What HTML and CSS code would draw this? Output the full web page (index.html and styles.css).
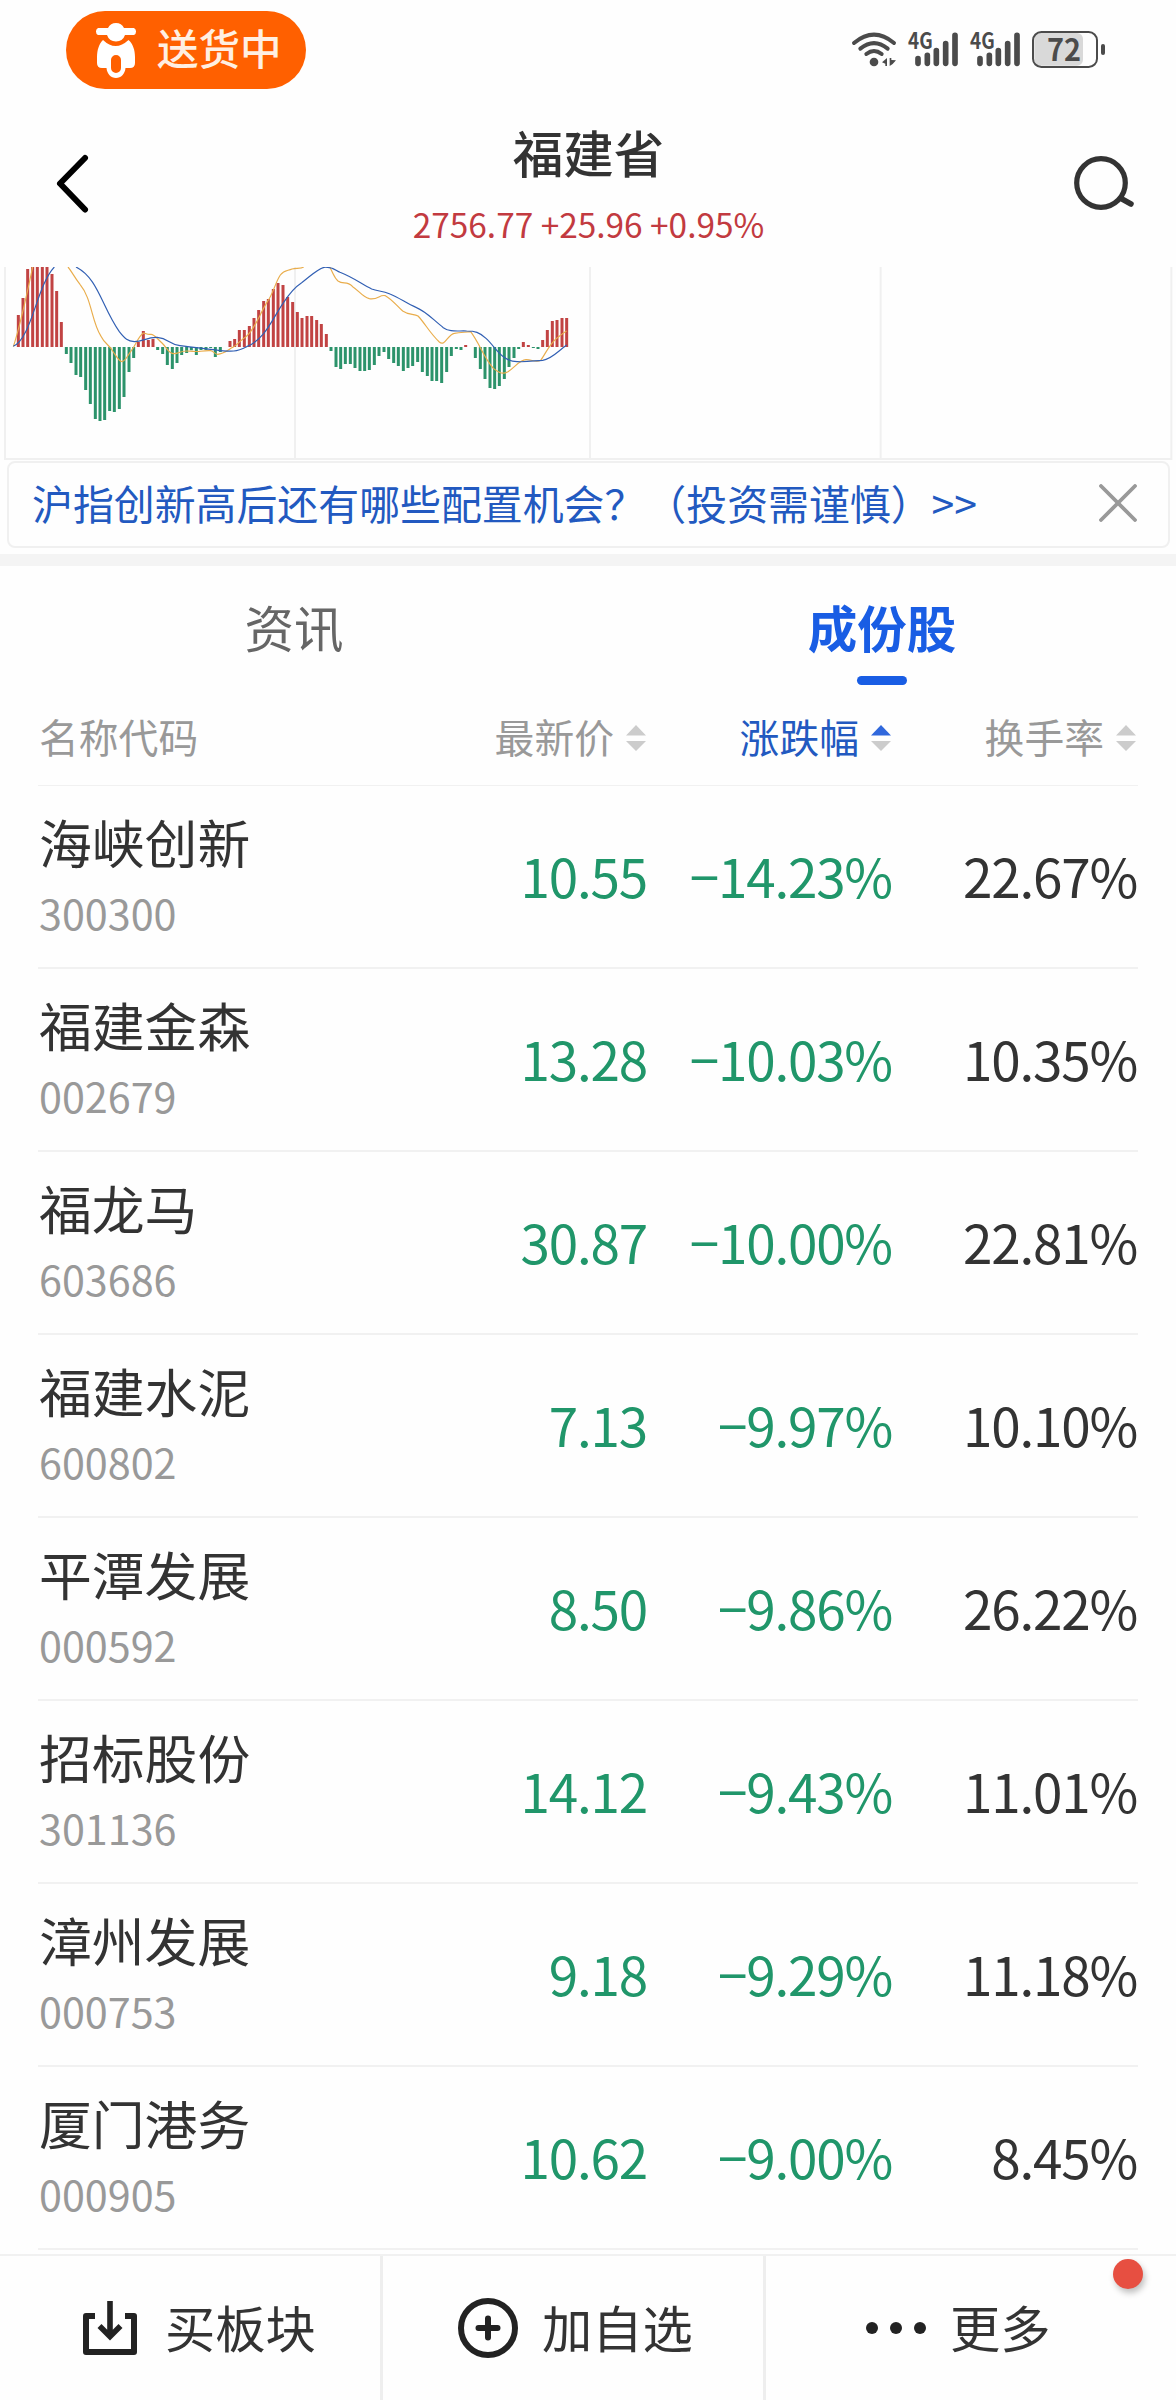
FILE: index.html
```html
<!DOCTYPE html>
<html lang="zh-CN">
<head>
<meta charset="utf-8">
<title>福建省</title>
<link rel="stylesheet" href="styles.css">
</head>
<body>
<div class="screen">
  <div class="status">
    <div class="pill">
      <svg class="scooter" viewBox="0 0 44 56" width="44" height="56"><path d="M4 6H14A9 9 0 0 1 30 6H40A4 4 0 0 1 40 13H31A9.500 9.500 0 0 1 13 13H4A4 4 0 0 1 4 6Z" fill="#fff"/><path fill-rule="evenodd" fill="#fff" d="M9 18Q21.500 30 34.500 18C39 22 41 28 41 35V41Q41 46 36 46H31.500C31 52 27 56 22 56S13 52 12.500 46H8Q3 46 3 41V35C3 28 5 22 9 18ZM22 33A5 5 0 0 0 17 38V46A5 5 0 0 0 27 46V38A5 5 0 0 0 22 33Z"/></svg>
      <span>送货中</span>
    </div>
    <svg class="signals" viewBox="0 0 840 210" width="280" height="70">
      <g fill="none" stroke="#4b4b4b" stroke-width="12" stroke-linecap="round"><path d="M42 84Q102 34 162 84M61 101Q102 68 143 101M79 117Q102 99 125 117"/></g>
      <circle cx="102" cy="141" r="13" fill="#4b4b4b"/>
      <path d="M126 142L141 129V153H136V146ZM149 129H154V135L168 136L158 147L149 153Z" fill="#4b4b4b"/>
      <g id="sim">
        <text x="204" y="102" textLength="74" lengthAdjust="spacingAndGlyphs" class="net">4G</text>
        <path d="M234 131V145M262 121V145M289 107V145M317 86V145M345 61V145" fill="none" stroke="#4b4b4b" stroke-width="17" stroke-linecap="round"/>
      </g>
      <use href="#sim" x="186"/>
      <rect x="583" y="54" width="146" height="98" rx="18" fill="#d9d9d9"/>
      <rect x="579" y="51" width="192" height="105" rx="25" fill="none" stroke="#4b4b4b" stroke-width="6"/>
      <path d="M789 93V114" stroke="#4b4b4b" stroke-width="12" stroke-linecap="round"/>
      <text x="621" y="137" textLength="102" lengthAdjust="spacingAndGlyphs" class="battery">72</text>
    </svg>
  </div>

  <header class="nav">
    <svg class="back" viewBox="0 0 36 64" width="36" height="64"><path d="M31 6.500L6 32L31 58" transform="translate(0 -.5)" fill="none" stroke="#000" stroke-width="6" stroke-linecap="round" stroke-linejoin="round"/></svg>
    <div class="heading">
      <h1>福建省</h1>
      <p>2756.77 +25.96 +0.95%</p>
    </div>
    <svg class="search" viewBox="0 0 64 60" width="64" height="60"><circle cx="29" cy="29" r="24.300" fill="none" stroke="#333" stroke-width="5.200"/><path d="M50 45L59 50" stroke="#333" stroke-width="5.500" stroke-linecap="round"/></svg>
  </header>

  <svg class="chart" viewBox="0 36 3528 579" width="1176" height="193">
    <path d="M15 36V612M885 36V612M1770 36V612M2642 36V612M3514 36V612M12 612H3517" fill="none" stroke="#f0f0f0" stroke-width="6"/>
    <path fill="none" stroke="#c14343" stroke-width="9" d="M55 276V180M69 276V129M83 276V42M98 276V36M112 276V36M127 276V36M141 276V36M156 276V57M170 276V108M184 276V201M415 276V261M430 276V228M445 276V255M459 276V252M690 276V258M704 276V252M718 276V225M733 276V225M748 276V213M762 276V189M776 276V165M791 276V138M805 276V132M820 276V102M834 276V84M849 276V90M863 276V126M878 276V141M892 276V171M906 276V189M921 276V183M935 276V183M950 276V195M964 276V207M979 276V237M1397 276V270M1570 276V261M1585 276V270M1628 276V255M1642 276V225M1657 276V198M1671 276V195M1686 276V189M1700 276V189"/>
    <path fill="none" stroke="#2c936b" stroke-width="9" d="M199 276V297M213 276V324M228 276V360M242 276V366M257 276V405M271 276V447M286 276V492M300 276V498M314 276V495M329 276V468M343 276V471M358 276V462M372 276V426M387 276V351M401 276V309M473 276V285M488 276V297M502 276V330M517 276V342M531 276V324M545 276V300M560 276V294M574 276V286M589 276V300M603 276V285M618 276V285M632 276V279M646 276V306M661 276V291M993 276V288M1008 276V336M1022 276V342M1036 276V327M1051 276V327M1065 276V339M1080 276V348M1094 276V348M1108 276V345M1123 276V330M1137 276V303M1152 276V291M1166 276V312M1181 276V324M1195 276V333M1210 276V348M1224 276V339M1238 276V333M1253 276V321M1267 276V351M1282 276V363M1296 276V378M1310 276V378M1325 276V384M1340 276V351M1354 276V303M1369 276V282M1383 276V285M1426 276V309M1441 276V342M1455 276V372M1470 276V399M1484 276V402M1498 276V393M1513 276V372M1527 276V336M1542 276V309M1556 276V282M1600 276V279M1614 276V282"/>
    <path fill="none" stroke="#e9ad4c" stroke-width="3.500" stroke-linejoin="round" d="M40 275C60 215 72 160 98 36M204 36C216 50 222 65 240 88C275 130 275 200 302 242C315 268 328 270 338 288C350 305 357 320 366 320C378 318 383 300 394 287C408 270 414 245 430 234C438 234 441 240 452 238C462 236 470 250 486 264C500 276 504 296 522 296C536 296 540 288 560 288C580 288 585 291 600 289C615 287 622 286 632 287C642 289 644 298 653 298C672 296 683 285 700 276C715 268 722 254 738 245C765 222 775 185 802 140C820 116 825 84 841 60C853 44 862 48 876 42C890 39 903 42 911 36M989 36C1000 55 1002 68 1014 78C1030 90 1040 76 1058 95C1078 108 1085 124 1108 131C1135 135 1138 118 1156 122C1175 132 1190 152 1208 168C1225 180 1242 176 1254 183C1275 205 1290 235 1318 261C1335 276 1343 238 1363 235C1380 232 1395 232 1412 230C1440 268 1450 305 1480 340C1500 356 1510 358 1524 350C1545 337 1558 315 1578 314C1594 313 1608 324 1622 316C1638 295 1650 262 1676 245C1690 234 1694 231 1700 228"/>
    <path fill="none" stroke="#315fb3" stroke-width="3.500" stroke-linejoin="round" d="M40 274C95 250 110 92 163 36M228 36C295 70 305 155 358 230C375 252 384 258 403 260C430 260 440 246 472 247C505 250 510 269 540 272C580 277 600 280 640 284C700 292 710 290 740 275C795 255 820 185 851 142C875 105 888 94 905 83C930 65 950 43 972 37C1000 35 1006 46 1020 52C1065 70 1085 88 1115 102C1135 110 1145 106 1170 117C1200 129 1220 146 1248 157C1280 170 1300 195 1330 218C1350 232 1370 227 1400 228C1425 228 1438 232 1458 250C1490 280 1505 318 1551 320C1585 322 1608 316 1628 316C1655 312 1672 290 1700 270"/>
  </svg>

  <div class="notice">
    <span>沪指创新高后还有哪些配置机会？（投资需谨慎）&gt;&gt;</span>
    <svg viewBox="0 0 38 38" width="38" height="38"><path d="M2 2L36 36M36 2L2 36" stroke="#999" stroke-width="3.800" stroke-linecap="round"/></svg>
  </div>
  <div class="band"></div>

  <nav class="tabs"><div class="tab">资讯</div><div class="tab active">成份股</div></nav>

  <div class="table">
    <div class="row head">
      <span>名称代码</span>
      <span class="sort">最新价<svg viewBox="0 0 20 26" width="20" height="26"><path d="M10 0L20 10.500H0Z M0 16H20L10 26Z"/></svg></span>
      <span class="sort on">涨跌幅<svg viewBox="0 0 20 26" width="20" height="26"><path class="up" d="M10 0L20 10.500H0Z"/><path class="idle" d="M0 16H20L10 26Z"/></svg></span>
      <span class="sort">换手率<svg viewBox="0 0 20 26" width="20" height="26"><path d="M10 0L20 10.500H0Z M0 16H20L10 26Z"/></svg></span>
    </div>
    <div class="row"><div class="stock"><b>海峡创新</b><i>300300</i></div><span class="num down">10.55</span><span class="num down">−14.23%</span><span class="num">22.67%</span></div>
    <div class="row"><div class="stock"><b>福建金森</b><i>002679</i></div><span class="num down">13.28</span><span class="num down">−10.03%</span><span class="num">10.35%</span></div>
    <div class="row"><div class="stock"><b>福龙马</b><i>603686</i></div><span class="num down">30.87</span><span class="num down">−10.00%</span><span class="num">22.81%</span></div>
    <div class="row"><div class="stock"><b>福建水泥</b><i>600802</i></div><span class="num down">7.13</span><span class="num down">−9.97%</span><span class="num">10.10%</span></div>
    <div class="row"><div class="stock"><b>平潭发展</b><i>000592</i></div><span class="num down">8.50</span><span class="num down">−9.86%</span><span class="num">26.22%</span></div>
    <div class="row"><div class="stock"><b>招标股份</b><i>301136</i></div><span class="num down">14.12</span><span class="num down">−9.43%</span><span class="num">11.01%</span></div>
    <div class="row"><div class="stock"><b>漳州发展</b><i>000753</i></div><span class="num down">9.18</span><span class="num down">−9.29%</span><span class="num">11.18%</span></div>
    <div class="row"><div class="stock"><b>厦门港务</b><i>000905</i></div><span class="num down">10.62</span><span class="num down">−9.00%</span><span class="num">8.45%</span></div>
  </div>

  <footer class="actions">
    <div class="action buy"><svg viewBox="0 0 54 54" width="54" height="54"><path d="M12 15H3V51H51V15H42" fill="none" stroke="#222" stroke-width="6" stroke-linejoin="round"/><path d="M27 0V35M16.500 25L27 35.500L37.500 25" fill="none" stroke="#222" stroke-width="5.600"/></svg><span>买板块</span></div>
    <div class="action add"><svg viewBox="0 0 60 60" width="60" height="60"><circle cx="30" cy="30" r="27" fill="none" stroke="#222" stroke-width="6"/><path d="M20.500 30H39.500M30 20.500V39.500" stroke="#222" stroke-width="6" stroke-linecap="round"/></svg><span>加自选</span></div>
    <div class="action more"><svg viewBox="0 0 60 12" width="60" height="12"><g fill="#222"><circle cx="6" cy="6" r="6"/><circle cx="30" cy="6" r="6"/><circle cx="54" cy="6" r="6"/></g></svg><span>更多</span><div class="badge"></div></div>
  </footer>
</div>
</body>
</html>
```
FILE: styles.css
```css
* { box-sizing: border-box; }
body {
  margin: 0;
  background: #fefefe;
  color: #333;
  font-family: "Noto Sans CJK SC", sans-serif;
}
.screen {
  width: 1176px;
  height: 2400px;
  display: flex;
  flex-direction: column;
  overflow: hidden;
  white-space: nowrap;
}
svg { display: block; flex: none; }

.status {
  height: 100px;
  padding: 11px 56px 0 66px;
  display: flex;
  justify-content: space-between;
  align-items: flex-start;
}
.pill {
  width: 240px;
  height: 78px;
  padding-left: 28px;
  display: flex;
  align-items: center;
  gap: 19px;
  border-radius: 39px;
  background: #ff6000;
  color: #ffefe2;
  font-size: 41.5px;
  font-weight: 500;
  line-height: 78px;
}
.pill span { margin-top: -6px; }
.signals { margin-top: 4px; }
.net { font: 700 66px "Noto Sans CJK SC", sans-serif; fill: #4b4b4b; }
.battery { font: 700 92px "Noto Sans CJK SC", sans-serif; fill: #4b4b4b; }

.nav {
  height: 167px;
  padding: 0 40px 0 54px;
  display: grid;
  grid-template-columns: 64px 1fr 64px;
}
.back { margin-top: 52px; }
.search { margin-top: 54px; }
.heading { text-align: center; margin-right: 13px; }
h1 {
  margin: 21px 0 0;
  font-size: 50.5px;
  font-weight: 500;
  line-height: 60px;
}
.heading p {
  margin: 23px 0 0;
  color: #c23a40;
  font-size: 33.4px;
  line-height: 40px;
}

.notice {
  height: 87px;
  margin: 1px 6px 0 7px;
  padding: 0 31px 3px 23px;
  display: flex;
  align-items: center;
  justify-content: space-between;
  border: 2px solid #f0f0f0;
  border-radius: 8px;
  color: #2259c0;
  font-size: 40.9px;
  line-height: 80px;
}
.notice span { margin-top: -1px; }
.band { height: 12px; margin-top: 6px; background: #f4f4f4; flex: none; }

.tabs { height: 120px; display: grid; grid-template-columns: 1fr 1fr; flex: none; }
.tab {
  padding-top: 23px;
  text-align: center;
  font-size: 49.5px;
  line-height: 76px;
  color: #666;
}
.tab.active { color: #195de4; font-weight: 700; }
.tab.active::after {
  content: "";
  display: block;
  width: 50px;
  height: 9px;
  margin: 11px auto 0;
  border-radius: 4.5px;
  background: #195de4;
}

.table { padding: 0 38px; flex: none; }
.row {
  height: 183px;
  padding-left: 1px;
  display: grid;
  grid-template-columns: 364px 245px 245px 245px;
  border-bottom: 2px solid #f1f1f1;
}
.row.head {
  height: 100px;
  border-bottom-width: 1px;
  color: #999;
  font-size: 39.8px;
  line-height: 100px;
}
.sort { display: flex; justify-content: flex-end; align-items: center; gap: 12px; padding-right: 2px; }
.sort svg { fill: #ccc; margin-top: 3px; }
.sort.on { color: #2259c0; }
.sort .up { fill: #3068dc; }
.stock b, .stock i { display: block; font-style: normal; }
.stock b { margin-top: 17px; font-size: 52.8px; font-weight: 400; line-height: 76px; }
.stock i { margin-top: 5px; font-size: 41.3px; line-height: 56px; color: #999; }
.num { text-align: right; font-size: 53px; line-height: 178px; letter-spacing: -1.2px; padding-right: 1px; }
.num.down { color: #20966a; }

.actions {
  height: 146px;
  margin-top: 4px;
  display: grid;
  grid-template-columns: 383px 383px 410px;
  border-top: 2px solid #f1f1f1;
  flex: none;
}
.action {
  position: relative;
  display: flex;
  align-items: center;
  font-size: 50.3px;
  line-height: 142px;
}
.action span { margin-top: -4px; }
.action + .action::before { content: ""; position: absolute; left: -3px; top: 0; bottom: 0; width: 3px; background: #eee; }
.buy { padding-left: 83px; gap: 28px; }
.add { padding-left: 75px; gap: 24px; }
.more { padding-left: 100px; gap: 24px; }
.badge {
  position: absolute;
  left: 347px;
  top: 3px;
  width: 30px;
  height: 30px;
  border-radius: 50%;
  background: #e74f41;
  box-shadow: 2px 4px 6px rgba(0, 0, 0, .25);
}
```
